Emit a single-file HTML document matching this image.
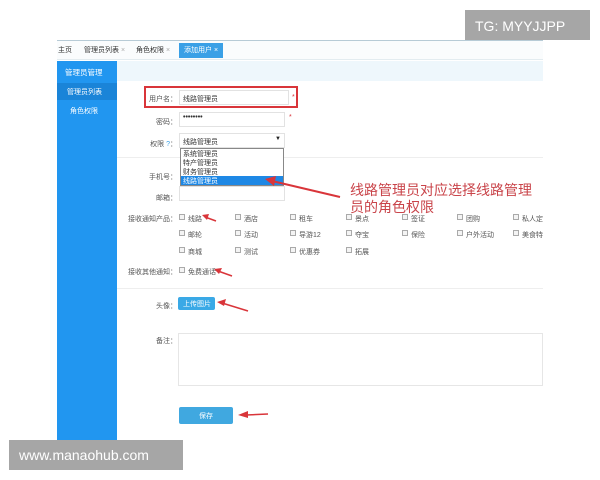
<!DOCTYPE html>
<html><head><meta charset="utf-8"><style>
*{margin:0;padding:0;box-sizing:border-box}
body{width:600px;height:480px;background:#fff;position:relative;overflow:hidden;font-family:"Liberation Sans","Noto Sans CJK SC",sans-serif;font-size:7px;color:#555}
.a{position:absolute;white-space:nowrap}
.inp{position:absolute;border:1px solid #e2e2e2;background:#fff}
.cb{position:absolute;width:6px;height:6px;border:1px solid #aaa;background:#f4f4f4}
.lbl{position:absolute;left:100px;width:77px;color:#555;font-size:7px;text-align:right;white-space:nowrap}
</style></head><body>
<div class="a" style="left:57px;top:40px;width:486px;height:1px;background:#b7cbd6"></div>
<div class="a" style="left:57px;top:41px;width:486px;height:19px;background:#fafcfd;border-bottom:1px solid #e3ecf0"></div>
<div class="a" style="left:58px;top:45px;color:#333">主页</div>
<div class="a" style="left:84px;top:45px;color:#333">管理员列表 <span style="color:#aaa">×</span></div>
<div class="a" style="left:136px;top:45px;color:#333">角色权限 <span style="color:#aaa">×</span></div>
<div class="a" style="left:179px;top:43px;width:44px;height:15px;background:#3aa0e6;color:#fff;padding:2px 0 0 5px">添加用户 <span>×</span></div>
<div class="a" style="left:117px;top:61px;width:426px;height:20px;background:#eef7fc"></div>
<div class="a" style="left:57px;top:61px;width:60px;height:379px;background:#2196f0"></div>
<div class="a" style="left:57px;top:61px;width:60px;height:20px;color:#fff;font-size:7.5px;padding:6px 0 0 8px">管理员管理</div>
<div class="a" style="left:57px;top:83px;width:60px;height:17px;background:#1a84d8;color:#fff;padding:4px 0 0 10px">管理员列表</div>
<div class="a" style="left:70px;top:106px;color:#fff">角色权限</div>

<div class="a" style="left:144px;top:86px;width:154px;height:22px;border:2px solid #d9353a"></div>
<div class="lbl" style="top:94px">用户名：</div>
<div class="inp" style="left:179px;top:90px;width:110px;height:15px"></div>
<div class="a" style="left:183px;top:94px;color:#333">线路管理员</div>
<div class="a" style="left:292px;top:94px;color:#d9353a">*</div>
<div class="lbl" style="top:117px">密码：</div>
<div class="inp" style="left:179px;top:112px;width:106px;height:15px"></div>
<div class="a" style="left:183px;top:114px;color:#333;font-weight:bold">••••••••</div>
<div class="a" style="left:289px;top:114px;color:#d9353a">*</div>
<div class="lbl" style="top:139px">权限 <span style="color:#3aa0e6">?</span>：</div>
<div class="inp" style="left:179px;top:133px;width:106px;height:15px"></div>
<div class="a" style="left:183px;top:137px;color:#333">线路管理员</div>
<div class="a" style="left:275px;top:136px;color:#222;font-size:6px">▼</div>
<div class="a" style="left:117px;top:157px;width:426px;height:1px;background:#eee"></div>
<div class="a" style="left:180px;top:148px;width:104px;height:38px;border:1px solid #888;background:#fff"></div>
<div class="a" style="left:183px;top:149px;color:#333">系统管理员</div>
<div class="a" style="left:183px;top:158px;color:#333">特产管理员</div>
<div class="a" style="left:183px;top:167px;color:#333">财务管理员</div>
<div class="a" style="left:181px;top:176px;width:102px;height:9px;background:#1e88e5;color:#fff;padding-left:2px">线路管理员</div>
<div class="lbl" style="top:172px">手机号：</div>
<div class="lbl" style="top:193px">邮箱：</div>
<div class="inp" style="left:179px;top:186px;width:106px;height:15px"></div>

<div class="a" style="left:350px;top:182px;color:#c9444a;font-size:14px;line-height:17px">线路管理员对应选择线路管理<br>员的角色权限</div>
<svg class="a" style="left:0;top:0" width="600" height="480">
<g fill="#d9353a" stroke="#d9353a">
<line x1="340" y1="197" x2="272" y2="181" stroke-width="2"/><polygon points="265,179 276,176 274,186" stroke="none"/>
<line x1="216" y1="221" x2="205" y2="217" stroke-width="1.5"/><polygon points="202,215 209,214 207,220" stroke="none"/>
<line x1="232" y1="276" x2="218" y2="271" stroke-width="1.5"/><polygon points="214,269 222,268 219,274" stroke="none"/>
<line x1="248" y1="311" x2="222" y2="303" stroke-width="1.5"/><polygon points="217,302 226,299 224,306" stroke="none"/>
<line x1="268" y1="414" x2="246" y2="415" stroke-width="1.5"/><polygon points="238,415 248,411 248,418" stroke="none"/>
</g></svg>

<div class="lbl" style="top:214px">接收通知产品：</div>
<div class="lbl" style="top:267px">接收其他通知：</div>
<div class="cb" style="left:179px;top:214px"></div><div class="a" style="left:188px;top:214px">线路</div>
<div class="cb" style="left:235px;top:214px"></div><div class="a" style="left:244px;top:214px">酒店</div>
<div class="cb" style="left:290px;top:214px"></div><div class="a" style="left:299px;top:214px">租车</div>
<div class="cb" style="left:346px;top:214px"></div><div class="a" style="left:355px;top:214px">景点</div>
<div class="cb" style="left:402px;top:214px"></div><div class="a" style="left:411px;top:214px">签证</div>
<div class="cb" style="left:457px;top:214px"></div><div class="a" style="left:466px;top:214px">团购</div>
<div class="cb" style="left:513px;top:214px"></div><div class="a" style="left:522px;top:214px">私人定</div>
<div class="cb" style="left:179px;top:230px"></div><div class="a" style="left:188px;top:230px">邮轮</div>
<div class="cb" style="left:235px;top:230px"></div><div class="a" style="left:244px;top:230px">活动</div>
<div class="cb" style="left:290px;top:230px"></div><div class="a" style="left:299px;top:230px">导游12</div>
<div class="cb" style="left:346px;top:230px"></div><div class="a" style="left:355px;top:230px">夺宝</div>
<div class="cb" style="left:402px;top:230px"></div><div class="a" style="left:411px;top:230px">保险</div>
<div class="cb" style="left:457px;top:230px"></div><div class="a" style="left:466px;top:230px">户外活动</div>
<div class="cb" style="left:513px;top:230px"></div><div class="a" style="left:522px;top:230px">美食特</div>
<div class="cb" style="left:179px;top:247px"></div><div class="a" style="left:188px;top:247px">商城</div>
<div class="cb" style="left:235px;top:247px"></div><div class="a" style="left:244px;top:247px">测试</div>
<div class="cb" style="left:290px;top:247px"></div><div class="a" style="left:299px;top:247px">优惠券</div>
<div class="cb" style="left:346px;top:247px"></div><div class="a" style="left:355px;top:247px">拓展</div>
<div class="cb" style="left:179px;top:267px"></div><div class="a" style="left:188px;top:267px">免费通话</div>
<div class="a" style="left:117px;top:288px;width:426px;height:1px;background:#eee"></div>
<div class="lbl" style="top:301px">头像：</div>
<div class="a" style="left:178px;top:297px;width:37px;height:13px;background:#3aa9e6;border-radius:2px;color:#fff;padding:2px 0 0 5px">上传图片</div>
<div class="lbl" style="top:336px">备注：</div>
<div class="inp" style="left:178px;top:333px;width:365px;height:53px;border-color:#e6e6e6"></div>
<div class="a" style="left:179px;top:407px;width:54px;height:17px;background:#40a8e0;border-radius:2px;color:#fff;text-align:center;padding-top:4px">保存</div>

<div class="a" style="left:465px;top:10px;width:125px;height:30px;background:#a6a6a6;color:#fff;font-size:14px;padding:8px 0 0 10px">TG: MYYJJPP</div>
<div class="a" style="left:9px;top:440px;width:174px;height:30px;background:#a6a6a6;color:#fff;font-size:14px;padding:7px 0 0 10px">www.manaohub.com</div>
</body></html>
